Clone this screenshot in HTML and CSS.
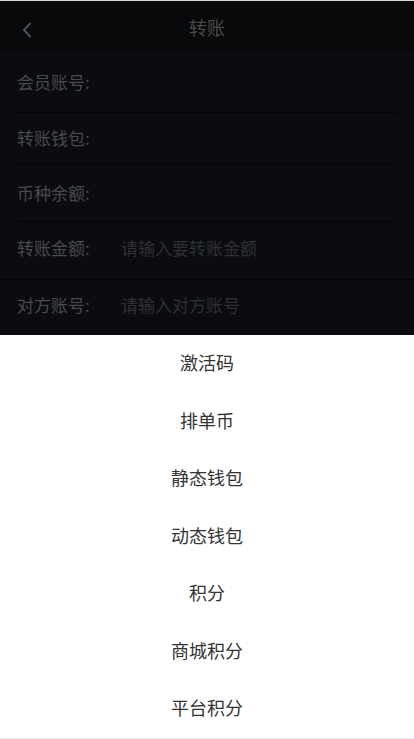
FILE: index.html
```html
<!DOCTYPE html>
<html lang="zh-CN">
<head>
<meta charset="utf-8">
<meta name="viewport" content="width=device-width, initial-scale=1">
<title>转账</title>
<link rel="stylesheet" href="styles.css">
</head>
<body>
<div class="app">
  <div class="topline"></div>
  <header class="nav">
    <span class="back">
      <svg width="10" height="16" viewBox="0 0 10 16"><path d="M8 1.5 L2 8 L8 14.5" fill="none" stroke="#4b5159" stroke-width="2" stroke-linecap="round" stroke-linejoin="round"/></svg>
    </span>
    <h1 class="title">转账</h1>
  </header>
  <section class="form">
    <div class="row r1"><span class="label">会员账号:</span><span class="value"></span></div>
    <div class="row r2"><span class="label">转账钱包:</span><span class="value"></span></div>
    <div class="row r3"><span class="label">币种余额:</span><span class="value"></span></div>
    <div class="row r4 full"><span class="label">转账金额:</span><input class="field" type="text" placeholder="请输入要转账金额"></div>
    <div class="row r5 noline"><span class="label">对方账号:</span><input class="field" type="text" placeholder="请输入对方账号"></div>
  </section>
  <section class="sheet">
    <div class="item">激活码</div>
    <div class="item">排单币</div>
    <div class="item">静态钱包</div>
    <div class="item">动态钱包</div>
    <div class="item">积分</div>
    <div class="item">商城积分</div>
    <div class="item">平台积分</div>
    <div class="cancel"></div>
  </section>
</div>
</body>
</html>
```
FILE: styles.css
```css
* { box-sizing: border-box; }
html, body { margin: 0; padding: 0; }
body {
  width: 414px;
  height: 739px;
  overflow: hidden;
  font-family: "Noto Sans CJK SC", "Noto Sans", "Liberation Sans", sans-serif;
  background: #ffffff;
}
.app { display: flex; flex-direction: column; height: 739px; }
.topline { height: 1px; background: #d8d8d8; flex: none; }
.nav {
  flex: none;
  height: 52px;
  background: #08090b;
  display: flex;
  align-items: center;
  justify-content: center;
  position: relative;
}
.back {
  position: absolute;
  left: 22px;
  top: 21px;
  width: 10px;
  height: 16px;
  display: flex;
}
.title {
  margin: 0;
  font-size: 18px;
  font-weight: normal;
  color: #4a4b4d;
  line-height: 52px;
}
.form { flex: none; background: #0a0c0f; }
.row {
  display: flex;
  align-items: center;
  margin: 0 17px;
  border-bottom: 1px solid #020304;
}
.row.full { margin: 0; padding-left: 17px; }
.row.noline { border-bottom: none; }
.r1 { height: 60px; padding-bottom: 2px; }
.r2 { height: 51px; padding-bottom: 1px; }
.r3 { height: 58px; padding-top: 1px; }
.r4 { height: 58px; padding-bottom: 5px; }
.r5 { height: 55px; padding-bottom: 5px; }
.label {
  width: 104px;
  flex: none;
  font-size: 17px;
  color: #494a4d;
  line-height: 24px;
}
.value { flex: 1; }
.field {
  flex: 1;
  min-width: 0;
  border: none;
  outline: none;
  background: transparent;
  font-family: inherit;
  font-size: 17px;
  line-height: 24px;
  padding: 0;
  color: #494a4d;
}
.field::placeholder { color: #2f3134; opacity: 1; }
.sheet { flex: 1; background: #ffffff; display: flex; flex-direction: column; }
.item {
  height: 57.5px;
  flex: none;
  display: flex;
  align-items: center;
  justify-content: center;
  padding-bottom: 3px;
  font-size: 18px;
  color: #333333;
}
.cancel { flex: 1; border-top: 2px solid #e6e6e6; }
```
